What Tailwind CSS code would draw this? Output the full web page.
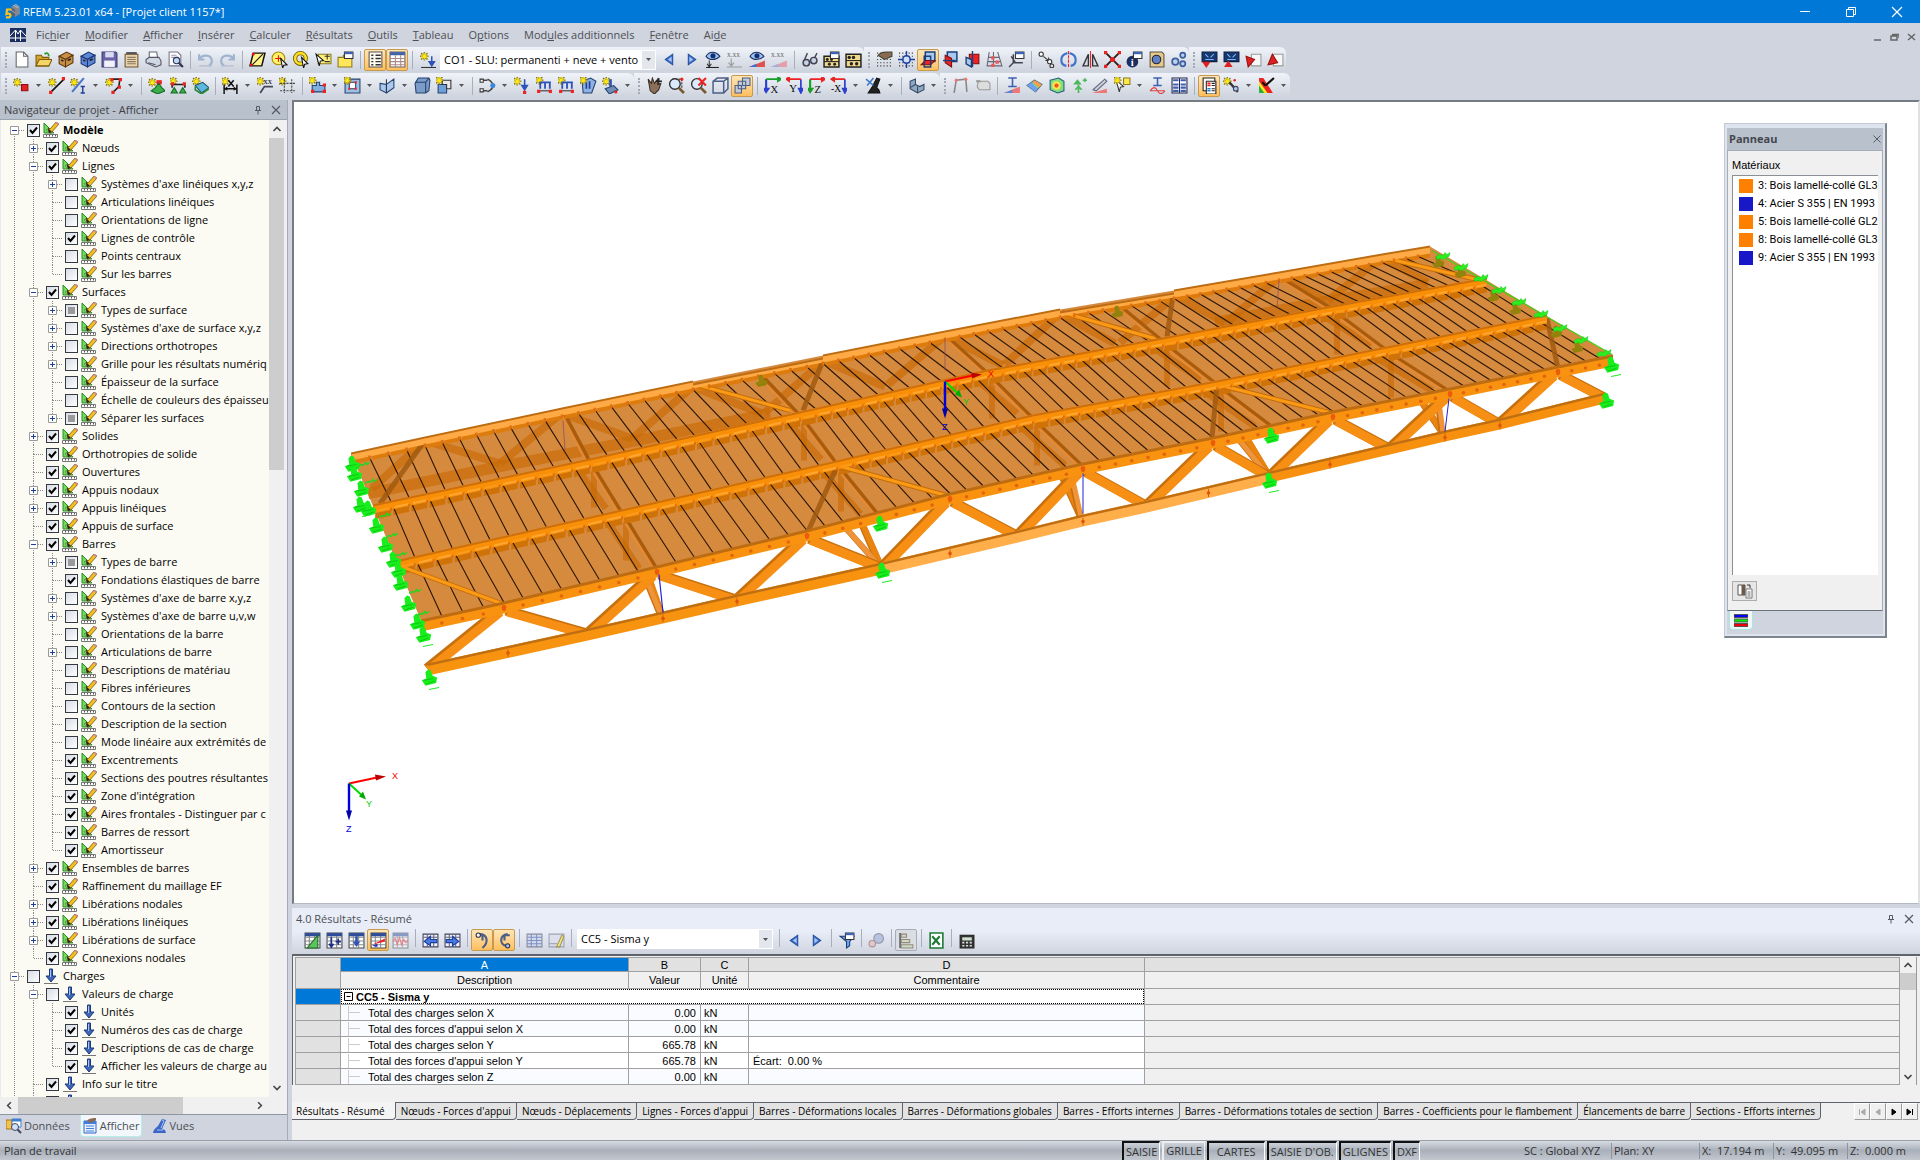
<!DOCTYPE html>
<html lang="fr">
<head>
<meta charset="utf-8">
<title>RFEM 5.23.01 x64 - [Projet client 1157*]</title>
<script src="https://cdn.jsdelivr.net/npm/@tailwindcss/browser@4"></script>
</head>
<body class="h-screen flex flex-col overflow-hidden bg-[#d0d4de] text-[11px] leading-4 text-black font-['Open_Sans','Noto_Sans',sans-serif] cursor-default select-none">

<!-- Title bar -->
<header class="h-[23px] shrink-0 flex items-center bg-[#0078d7] text-white pl-1">
  <svg class="size-4 mr-[3px]" viewBox="0 0 16 16"><path d="M7 3l5-3 4 3v7l-5 3-4-3z" fill="#7e8794"/><path d="M7 3l4 3v7l-4-3z" fill="#56606e"/><path d="M9 1l5 3M11 0l4 3M7 6l4 3" stroke="#b9c2cf" stroke-width=".8"/><path d="M7.500 5.500H3L2.500 10c2-.8 4-.3 4 1.600S4 14 2 13" fill="none" stroke="#ffc21c" stroke-width="2.200"/></svg>
  <h1 class="grow">RFEM 5.23.01 x64 - [Projet client 1157*]</h1>
  <button class="w-[46px] h-full grid place-items-center" aria-label="Réduire"><svg class="size-3" viewBox="0 0 12 12"><path d="M1 5.500h10" stroke="#fff"/></svg></button>
  <button class="w-[46px] h-full grid place-items-center" aria-label="Restaurer"><svg class="size-3" viewBox="0 0 12 12"><path d="M1.500 3.500h7v7h-7zM3.500 3.500v-2h7v7h-2" fill="none" stroke="#fff"/></svg></button>
  <button class="w-[46px] h-full grid place-items-center" aria-label="Fermer"><svg class="size-3" viewBox="0 0 12 12"><path d="M1 1l10 10M11 1L1 11" stroke="#fff" stroke-width="1.200"/></svg></button>
</header>

<!-- Menu bar -->
<nav class="h-6 shrink-0 flex items-center pl-[10px] pr-1 text-[#4c4f55]" id="menu">
  <svg class="w-4 h-[14px] mr-[10px]" viewBox="0 0 16 14"><path d="M0 0h16v14H0z" fill="#1c2f63"/><path d="M0 10h16M5.500 2v11M10.500 2v11M0 8l5.500-6L8 6l2.500-4L16 8" stroke="#fff" fill="none"/></svg>
</nav>

<!-- Toolbars -->
<div class="h-[53px] shrink-0 flex flex-col" id="toolbars"></div>

<main class="flex-1 min-h-0 flex">
  <!-- Navigator -->
  <aside class="w-[288px] shrink-0 flex flex-col border-r border-[#a5abb6] mr-1">
    <div class="h-5 shrink-0 flex items-center bg-[#b9c1cc] pl-1 pr-[6px] text-[#3c4046] border-b border-[#9aa3b0]">
      <h2 class="grow">Navigateur de projet - Afficher</h2>
      <button class="mr-2" aria-label="Épingler"><svg class="size-[10px]" viewBox="0 0 10 10"><path d="M3.500 1.500h3v4h-3zM2 5.500h6M5 6v3.500" fill="none" stroke="#555b66"/></svg></button>
      <button aria-label="Fermer"><svg class="size-[10px]" viewBox="0 0 10 10"><path d="M1 1l8 8M9 1L1 9" stroke="#555b66" stroke-width="1.200"/></svg></button>
    </div>
    <div class="flex-1 min-h-0 flex bg-[#f0f0f0] border-l border-[#e6eaf2]">
      <ul class="flex-1 min-w-0 overflow-hidden bg-[#fcfbf3] pt-px" id="tree"></ul>
      <div class="w-[15px] mr-[3px] flex flex-col items-center">
        <svg class="size-[18px] shrink-0" viewBox="0 0 18 18"><path d="M5.500 11L9 7.500l3.500 3.500" fill="none" stroke="#444" stroke-width="1.600"/></svg>
        <div class="h-[34%] w-full bg-[#cdcdcd]"></div>
        <svg class="size-[18px] shrink-0 mt-auto" viewBox="0 0 18 18"><path d="M5.500 7L9 10.500 12.500 7" fill="none" stroke="#444" stroke-width="1.600"/></svg>
      </div>
    </div>
    <div class="h-[18px] shrink-0 flex items-stretch bg-[#f0f0f0] border-b border-[#8f96a3] pr-[18px]">
      <svg class="w-[18px]" viewBox="0 0 18 18"><path d="M11 5.500L7.500 9l3.500 3.500" fill="none" stroke="#444" stroke-width="1.600"/></svg>
      <div class="w-[165px] bg-[#cdcdcd]"></div>
      <svg class="w-[18px] ml-auto" viewBox="0 0 18 18"><path d="M7 5.500L10.500 9 7 12.500" fill="none" stroke="#444" stroke-width="1.600"/></svg>
    </div>
    <div class="h-[25px] shrink-0 flex items-start pl-1 text-[#4c4f55]">
      <button class="h-[22px] px-[2px] flex items-center gap-[2px]"><svg class="size-4" viewBox="0 0 16 16"><path d="M0 2h6v9H0z" fill="#f2c14e" stroke="#a87712"/><path d="M6 1h9v8H6z" fill="#fff" stroke="#3f7fd0"/><path d="M6 1h9v2.500H6z" fill="#3f7fd0"/><circle cx="9" cy="9" r="3.500" fill="#cfe4fb" stroke="#446"/><path d="M11.500 11.500L15 15" stroke="#446" stroke-width="2"/></svg>Données</button>
      <button class="h-[22px] px-px ml-2 flex items-center gap-[2px] bg-[#f3f7fc] rounded-b-sm border border-t-0 border-[#b5eee8]"><svg class="size-4" viewBox="0 0 16 16"><path d="M2 3h12v12H2z" fill="#e9f1fd" stroke="#2e62c0"/><path d="M2 3h12v3H2z" fill="#3f7fe0"/><path d="M4 8h8M4 10.500h8M4 13h8" stroke="#3f7fe0"/><path d="M5 3c2-3 6-3 9-3v2L9 5z" fill="#8a6a52"/></svg>Afficher</button>
      <button class="h-[22px] px-[2px] ml-2 flex items-center gap-[2px]"><svg class="size-4" viewBox="0 0 16 16"><path d="M1 15h13l-1-3-3-1 4-9-4-1-4 7c-3 2-5 5-5 7z" fill="#3a66c8"/><path d="M5 12h6M10 2l2 1-3 7" fill="none" stroke="#a9c5f7"/></svg>Vues</button>
    </div>
  </aside>

  <div class="flex-1 min-w-0 flex flex-col">
    <!-- Model view -->
    <section class="relative flex-1 min-h-0 bg-white border-t-2 border-l-2 border-r-2 border-b border-t-[#777b82] border-l-[#777b82] border-r-[#dfe1e5] border-b-[#b4b8c0]">
      <svg class="w-full h-full block" viewBox="294 102 1624 800" id="model" role="img" aria-label="Modèle 3D"></svg>
      <aside class="absolute top-[21px] right-[31px] w-[163px] h-[515px] flex flex-col p-[2px] pt-1 bg-[#dfe5f0] border border-[#c3c8d2] border-r-2 border-b-2 border-r-[#7f858f] border-b-[#7f858f]">
        <div class="h-[22px] shrink-0 flex items-center justify-between bg-[#b9c1cc] px-[2px] font-bold text-[#43474e]"><h2>Panneau</h2><button aria-label="Fermer"><svg class="size-2" viewBox="0 0 8 8"><path d="M.5.5l7 7M7.500.5l-7 7" stroke="#555b66"/></svg></button></div>
        <div class="flex-1 min-h-0 flex flex-col bg-[#f0f0f0] border border-[#a7adb8] border-b-[#6c7078] px-1 pt-[6px] font-['Roboto',sans-serif]">
          <h3 class="h-[18px] shrink-0 font-['Liberation_Sans',sans-serif]">Matériaux</h3>
          <ul class="flex-1 bg-white border-t border-l border-[#8b8f96] pt-px pl-[6px] overflow-hidden whitespace-nowrap" id="materials"></ul>
          <button class="mt-[6px] mb-[9px] w-[25px] h-[20px] shrink-0 grid place-items-center border border-[#adadad] bg-[#e6e6e6]" aria-label="Matériaux"><svg class="size-4" viewBox="0 0 16 16"><path d="M1 2h7v10H1z" fill="#fff" stroke="#555"/><path d="M4.500 2H8v10H4.500z" fill="#6b5a4a"/><path d="M10 2h3v3" fill="none" stroke="#333"/><path d="M9 6h6v9H9z" fill="#fff" stroke="#777"/><path d="M10.500 9h3M10.500 11h3M10.500 13h3" stroke="#666"/></svg></button>
        </div>
        <div class="h-[23px] shrink-0 flex bg-[#d0d4de]"><button class="w-[24px] h-[19px] ml-[2px] grid place-items-center bg-[#f2f6fa] rounded-b border border-t-0 border-[#a9e6de]" aria-label="Couleurs"><svg class="w-[14px] h-[13px]" viewBox="0 0 14 13"><path d="M0 .5h14v3H0z" fill="#00f" stroke="#555"/><path d="M0 5h14v3H0z" fill="#0e0" stroke="#555"/><path d="M0 9.500h14v3H0z" fill="#e00" stroke="#555"/></svg></button></div>
      </aside>
    </section>

    <!-- Results -->
    <section class="shrink-0 mt-1 flex flex-col bg-[#f0f0f0]">
      <div class="bg-linear-to-b from-[#e8edf7] from-50% to-[#cfd4de]">
        <div class="h-[21px] flex items-center pl-1 pr-[6px] text-[#4c4f55]">
          <h2 class="grow">4.0 Résultats - Résumé</h2>
          <button class="mr-2" aria-label="Épingler"><svg class="size-[10px]" viewBox="0 0 10 10"><path d="M3.500 1.500h3v4h-3zM2 5.500h6M5 6v3.500" fill="none" stroke="#555b66"/></svg></button>
          <button aria-label="Fermer"><svg class="size-[10px]" viewBox="0 0 10 10"><path d="M1 1l8 8M9 1L1 9" stroke="#555b66" stroke-width="1.200"/></svg></button>
        </div>
        <div class="h-[25px] flex items-start pl-[9px]" id="resultbar"></div>
      </div>
      <div class="border-t-2 border-[#5f646c] border-l pt-px pl-[2px] flex font-['Liberation_Sans',sans-serif]">
        <table class="flex-1 grow w-full table-fixed border-collapse border border-[#a0a0a0] [&_td]:border [&_td]:border-[#a0a0a0] [&_th]:border [&_th]:border-[#a0a0a0] leading-[14px]">
          <colgroup><col class="w-[45px]"><col class="w-[288px]"><col class="w-[72px]"><col class="w-[48px]"><col class="w-[396px]"><col></colgroup>
          <thead>
            <tr class="h-[14px] leading-[12px] [&_th]:font-normal [&_th]:p-0 bg-[#e1e1e1]"><th rowspan="2" class="bg-[#e1e1e1]"></th><th class="bg-[#0078d7] text-white">A</th><th>B</th><th>C</th><th>D</th><th></th></tr>
            <tr class="h-[17px] [&_th]:font-normal [&_th]:p-0 bg-[#f0f0f0]"><th>Description</th><th>Valeur</th><th>Unité</th><th>Commentaire</th><th></th></tr>
          </thead>
          <tbody id="rows"></tbody>
        </table>
        <div class="w-[17px] mr-[3px] flex flex-col items-center bg-[#f0f0f0] border-r border-[#9a9a9a]">
          <svg class="size-4 shrink-0" viewBox="0 0 16 16"><path d="M4.500 10L8 6.500l3.500 3.500" fill="none" stroke="#444" stroke-width="1.600"/></svg>
          <div class="h-[17px] w-full bg-[#cdcdcd]"></div>
          <svg class="size-4 shrink-0 mt-auto" viewBox="0 0 16 16"><path d="M4.500 6L8 9.500 11.500 6" fill="none" stroke="#444" stroke-width="1.600"/></svg>
        </div>
      </div>
      <div class="mt-[17px] mb-[20px] h-[18px] flex items-stretch border-t border-[#5f646c] text-[10px] whitespace-nowrap" id="tabs"></div>
    </section>
  </div>
</main>

<!-- Status bar -->
<footer class="h-5 shrink-0 flex items-center pl-1 bg-linear-to-b from-[#d7dbe2] via-[#a9b0ba] to-[#c3c8d0] text-[#333] border-t border-[#9aa0aa]" id="statusbar"></footer>

<script>
(() => {
const $=id=>document.getElementById(id);
const p=(d,f='none',s='none',w=1)=>`<path d="${d}" fill="${f}" stroke="${s}" stroke-width="${w}"/>`;
const c=(x,y,r,f='none',s='none',w=1)=>`<circle cx="${x}" cy="${y}" r="${r}" fill="${f}" stroke="${s}" stroke-width="${w}"/>`;
const star=(x=4,y=4)=>p(`M${x-4} ${y}h8M${x} ${y-4}v8M${x-3} ${y-3}l6 6M${x+3} ${y-3}l-6 6`,'none','#8a7a10',1.4)+p(`M${x-3} ${y}h6M${x} ${y-3}v6M${x-2} ${y-2}l4 4M${x+2} ${y-2}l-4 4`,'none','#ffe818',1);
const cyl=(f,d)=>p('M2 5l7-4 6 3-7 4z',f,d)+p('M2 5l6 3v7l-6-3z',f,d)+p('M8 8l7-4v7l-7 4z',f,d)+p('M4 8.500l2 1M10 9l3-1.500','none','#222',1.5);
const win=p('M7 1h8v6H7z','#fff','#333')+p('M7 1h8v2H7z','#3b62b8');
const grid=p('M1 1h14v14H1z','#fff','#444')+p('M1 5h14M1 8.500h14M1 12h14M5 1v14M10 1v14','none','#888')+p('M1 1h14v3H1z','#2d4c9a');
const cube=(f)=>p('M4 1h10l1 2-1 10-3 2H2L1 6z',f,'#24426f')+p('M1 5h10l3-4M11 5v10','none','#24426f');
const dots=p('M1 2h14M1 5h14M1 8h14M1 11h14M1 14h14','none','#333',1).replace('/>',' stroke-dasharray="1 2"/>');
const mag=c(6.5,6.5,5,'#dcebfb','#333',1.3)+p('M10 10l5 5','none','#7a5a30',2.6);
const eye=p('M1 5c3-5 9-5 13 0-4 4-10 4-13 0z','#9cc3f2','#1b2f60')+c(7.5,4.500,2.400,'#12306e');
const tri=(u)=>p('M1 1h14v9H1z','#17386f','#0b1d40')+p('M4 3l3 3M12 3L9 6M4 8h8','none','#7fb6ff')+p(u?'M1 15l4-6 4 6z':'M1 10h8l-4 6z','#e02020');
const tri2=(u)=>p('M6 3h9v11H6z','#f7f7f7','#999')+p(u?'M1 13l4-10 5 8z':'M1 5l8 3-6 7z','#e02020','#991010');
const axis=(t,a,b)=>p('M2 2v12M2 14l-2-3h4z','none',b,2)+p('M2 2h11M13 0v4l3-2z',a,a,1.6)+`<text x="6" y="15" font-size="10" font-family="Liberation Serif" fill="#111">${t}</text>`;
const I={
 new:p('M3 1h7l4 4v10H3z','#fff','#666')+p('M10 1v4h4','none','#666'),
 open:p('M1 4h5l1 2h6v8H1z','#d6a72c','#7c5b0a')+p('M1 14l3-6h12l-3 6z','#f6d567','#7c5b0a')+p('M9 3c2-2 4-1 4 2','none','#2b9a32',1.6),
 cab:cyl('#c98f45','#5b3910'),cab2:cyl('#5c86d6','#1b3370'),
 save:p('M1 1h13l1 1v13H1z','#6b63a8','#3c3770')+p('M4 1h8v5H4z','#d8dcf0')+p('M3 9h10v6H3z','#f2f2fa'),
 clip:p('M2 3h12v12H2z','#e9d3ad','#6d5433')+p('M4 6h8M4 8h8M4 10h8M4 12h8','none','#8c7a60')+p('M3 1h10v2H3z','#555'),
 print:p('M4 1h7l1 6H4z','#fff','#667')+p('M1 8l3-2h9l2 3v4l-5 2-9-4z','#cfd6e4','#556')+p('M3 11l7 2','none','#556'),
 prev:p('M2 1h8l3 3v10H2z','#fff','#778')+p('M4 4h5M4 6h7','none','#99a')+c(9,9,3,'#bcd8f5','#335')+p('M11 11l4 4','none','#335',2),
 undo:p('M2 3v5h5M2 8c3-5 11-5 12 1 0 2-1 4-3 5','none','#9fb2cf',2)+p('M2 14h12','none','#b9c4d4',1.500),
 redo:p('M14 3v5H9M14 8C11 3 3 3 2 9c0 2 1 4 3 5','none','#9fb2cf',2)+p('M2 14h12','none','#b9c4d4',1.500),
 sel:p('M4 2h11l-3 12H1z','#fff48a','#111',1.4)+p('M3 13L13 3','none','#111')+c(4,3,1.300,'#e11')+c(2,13,1.300,'#e11'),
 selc:c(7,7,6,'#fff36b','#a88a00')+p('M7 4v6M4 7h6','none','#e11')+p('M9 7l6 6-3 .5L11 16z','#fff','#111'),
 ring:c(7,7,5,'none','#6b5a00',4)+c(7,7,5,'none','#ffdf20',2.400)+p('M8 6l6 6-3 .5L10 16z','#fff','#111'),
 sely:p('M3 3h12v9H3z','#fff07a','#8a7a20')+p('M9 5h5M11.500 3v5M9 10h5','none','#333')+p('M1 3l7 6-3 .5L4 14z','#fff','#111'),
 folder2:p('M1 6h5V4h8v11H1z','#ffe65a','#8a7a20')+win,
 list:p('M2 1h12v14H2z','#fffdf2','#555')+p('M4 4h2M4 7h2M4 10h2M4 13h2M8 4h5M8 7h5M8 10h5M8 13h5','none','#333',1.300),
 tab:p('M1 1h14v14H1z','#fff','#666')+p('M1 1h14v3H1z','#4464a8')+p('M1 7h14M1 10h14M1 13h14M6 4v11M11 4v11','none','#a88'),
 newload:star(5,5)+p('M12 5v7M9.500 10l2.500 4 2.500-4z','#2d52b8','#2d52b8',1.400)+p('M2 15.500h14','none','#333'),
 left:p('M11 3v10L4 8z','#3f6fd0','#24509f')+p('M10 5.500v5L6.500 8z','#a9c8f7'),right:p('M5 3v10l7-5z','#3f6fd0','#24509f')+p('M6 5.500v5L9.500 8z','#a9c8f7'),
 eyel:eye+p('M4 9v5M2 12l2 3 2-3','none','#333')+p('M1 15.500h12','none','#222'),
 xx:`<text x="0" y="6" font-size="7" font-family="Liberation Serif" fill="#666">x.xx</text>`+p('M4 7v6M1.500 11L4 14l2.500-3M0 15h14','none','#999'),
 eyer:eye+p('M0 15h15V9z','#e05050')+p('M0 15l7-3v3z','#3f6fd0'),
 xxr:`<text x="0" y="6" font-size="7" font-family="Liberation Serif" fill="#666">x.xx</text>`+p('M0 15h15V9z','#e3a0a8')+p('M0 15l7-3v3z','#a0b0dc'),
 glass:c(5,11,3,'#c7d4e6','#445',1.400)+c(12,9,3,'#c7d4e6','#445',1.400)+p('M3 9L6 2M13 6l2-4','none','#445',1.300),
 abw:p('M1 5h14v10H1z','#f2d98b','#222',1.400)+p('M1 10h14','none','#222')+c(4,8,1.400,'#222')+c(8,8,1.400,'#222')+c(6,12.500,1.400,'#222')+c(11,12.500,1.400,'#222')+win,
 aba:p('M1 3h14v12H1z','#f2d98b','#222',1.400)+p('M1 9h14','none','#222')+c(4,6,1.600,'#222')+c(8,6,1.600,'#222')+c(6,12,1.600,'#222')+c(11,12,1.600,'#222'),
 gridh:dots+p('M2 4c3-4 8-3 13-3v4L8 8z','#8a6a52','#443'),
 snap:dots+c(8,8,3.500,'#cfe0fb','#1b3f9a',1.400)+p('M8 0v5M8 11v5M0 8h5M11 8h5','none','#1b3f9a',1.300),
 pl1:p('M5 1h9v9H5z','#a9c9ef','#1b3f7a',1.400)+p('M1 13l4-4h9l-4 4z','#e22','#7a1010')+p('M4 5h6v10H4z','none','#1b3f7a',1.400),
 pl2:p('M5 1h9v9H5z','#a9c9ef','#1b3f7a',1.400)+p('M3 4l6 3v8l-6-4z','#e22','#7a1010')+p('M1 9h12','none','#1b3f7a',1.400),
 pl3:p('M5 3h9v9H5z','#e22','#7a1010')+p('M2 6l5 2v7l-5-3zM8 0v15','#a9c9ef','#1b3f7a',1.300),
 axs:p('M3 1l-2 13h14L11 1M2 6h11M2 10h12M7 1v13','none','#667')+p('M5 5h3v3H5zM9 9h3v3H9zM5 12h3v3H5z','#e55'),
 axw:win+p('M5 3v8L1 15M5 11h9M3 5l4 6','none','#445',1.400),
 mv:c(3,3,2,'#fff','#333')+p('M5 5l5 4M10 6v3H7','none','#333')+c(11,10,2,'#fff','#333')+c(13,14,1.800,'#ddd','#333'),
 rot:p('M7 2C-1 4 0 13 6 14M9 2c8 2 7 11 1 12','none','#3f72c8',2)+p('M8 0v16','none','#e22').replace('/>',' stroke-dasharray="3 1"/>'),
 mir:p('M6 3v11H1z','none','#333',1.300)+p('M10 3v11h5z','none','#333',1.300)+p('M8 0v16','none','#e22'),
 xc:p('M1 1l14 14M15 1L1 15','none','#222',1.800)+c(8,8,2.400,'#e22')+p('M0 0h3v3H0zM13 0h3v3h-3zM0 13h3v3H0zM13 13h3v3h-3z','#e22'),
 info:c(6,10,5.500,'#1c2d60')+`<text x="4.500" y="14" font-size="10" font-weight="bold" font-family="Liberation Serif" fill="#fff">i</text>`+win,
 book:p('M2 1h11l2 2v12H2z','#e8c98a','#554')+c(8,8,4,'#5d83c4','#223'),
 gears:c(5,10,3,'#bcd0ee','#3d5f9e',1.600)+c(12,4,2.400,'#bcd0ee','#3d5f9e',1.600)+c(12,12,2.400,'#bcd0ee','#3d5f9e',1.600),
 dn1:tri(0),up1:tri(1),dn2:tri2(0),up2:tri2(1),
 node:star(4,5)+p('M8 7h6v6H8z','#e22222','#901010'),
 line:star(4,5)+p('M2 15L15 2','none','#111',1.500)+p('M1 13h3v3H1zM13 0h3v3h-3z','#e22'),
 bar:star(4,5)+p('M2 14L13 1','none','#4a77c8',2)+p('M10 9h4M12 9v6M10 15h4','none','#1b3f9a',1.300),
 arc:star(4,5)+p('M6 2h8l-1 7-5 5','none','#222',1.500)+p('M5 1h3v3H5zM13 1h3v3h-3zM12 8h3v3h-3zM6 13h3v3H6z','#e22'),
 nsup:star(4,5)+p('M8 3h5v4H8z','#e22')+p('M10 6l3 4 3 3-7 3-6-3 4-3z','#3cae4a','#156b22'),
 lsup:star(3,4)+p('M2 7h12M2 7v3M14 7v3','none','#222',1.500)+p('M1 5h3v3H1zM12 5h3v3h-3z','#e22')+p('M1 15l3-5 3 5zM9 15l3-5 3 5z','#3cae4a','#156b22'),
 ssup:star(4,4)+p('M3 8l7-3 6 5-7 5z','#5db8e0','#256')+p('M3 9v3l6 4 7-5','none','#2b8a3a',1.500),
 dim:star(3,4)+p('M2 7v9M14 7v9M2 11h12M6 3l5 6M11 3L6 9','none','#111',1.400)+p('M2 11l3-2v4zM14 11l-3-2v4z','#111'),
 dimx:star(3,4)+`<text x="6" y="7" font-size="8" font-family="Liberation Serif">xx</text>`+p('M3 15l4-6h8','none','#445',1.600),
 frame:star(3,4)+p('M5 2v13M12 2v13M1 6h14M1 13h14','none','#444').replace('/>',' stroke-dasharray="2 1"/>'),
 surf:star(3,3)+p('M3 8h4V5h3v3h5v6H3z','#7fb0e0','#24426f')+p('M2 12h3v3H2zM13 12h3v3h-3zM13 6h3v3h-3z','#e22'),
 hole:p('M1 2h14v13H1z','#9fc0e4','#24426f')+p('M5 5h6v6H5z','#fff','#24426f')+p('M4 4h2v2H4zM10 4h2v2h-2zM10 10h2v2h-2zM4 10h2v2H4z','#e22')+star(3,3),
 surf2:p('M1 6l6 1v8l-6-3zM7 7l7-5v8l-7 5z','#a9c9ef','#24426f')+p('M7 2v13','none','#335'),
 solid:cube('#7b9cc8'),solid2:p('M2 7h8v8H2z','#6f9fd8','#24426f')+p('M6 3h8v8h-4V7H6z','#e8e8e8','#333')+star(3,3),
 rel:p('M1 3h7M1 13h7','none','#444',1.500)+p('M8 2c4 2 5 4 5 6s-1 4-5 6','none','#444',1.500)+p('M1 2h3v3H1zM1 11h3v3H1z','#fff','#333')+c(13,8,2.400,'#3e88d8'),
 nload:star(3,4)+p('M10 2v8M7.500 8l2.500 4 2.500-4z','#2d52b8','#2d52b8',1.500)+p('M8.500 13h3v3h-3z','#e22'),
 lload:star(3,3)+p('M3 5h11M4 5v6M8.500 5v6M13 5v6','none','#2d52b8',1.700)+p('M2 13h12','none','#333')+p('M1 12h3v3H1zM12 12h3v3h-3z','#e22'),
 vload:p('M2 4l8-3 5 3-4 11H3z','#8eb2e4','#24426f')+p('M6 5v6M9 4v7','none','#1b3f9a',1.600)+star(3,3),
 gload:star(4,4)+p('M8 2v7','none','#2d52b8',2.500)+p('M3 11l8-3 4 4-8 4z','#6f8fb8','#24426f')+c(13,14,1.500,'#e22'),
 hand:p('M2 2l3 4 1-5 2 5 3-4v5l3-1-2 6-4 4-4-3z','#8a6f5c','#3e2f24')+p('M12 1v6M9 4h6','none','#222',1.300),
 zoom:mag+p('M4 2h9v9','none','#333').replace('/>',' stroke-dasharray="2 1"/>')+c(13,2,1.500,'#e22'),
 zoomx:mag+p('M8 1l7 7M15 1L8 8','none','#e22',2),
 wire:p('M1 4l4-3h10v10l-4 4H1zM1 4h10v11M11 4l4-3','none','#4d5f86',1.400),
 cubes:p('M8 1h7v7H8zM4 4h7v7H4zM1 8h6v7H1z','#c3cbd6','#4d5f86'),
 ax:axis('X','#19a02a','#2d3fd0'),ay:p('M14 2v12M14 15l-2-4h4z','#2d3fd0','#2d3fd0',1.600)+p('M3 2h11M3 0v4L0 2z','#e22','#e22',1.500)+`<text x="3" y="14" font-size="10" font-family="Liberation Serif">Y</text>`,
 az:axis('Z','#e22','#19a02a'),amx:p('M14 2v12M14 15l-2-4h4z','#2d3fd0','#2d3fd0',1.600)+p('M4 2h10M4 0v4L1 2z','#19a02a','#e22',1.500)+`<text x="1" y="14" font-size="9" font-family="Liberation Serif">-X</text>`,
 micro:p('M3 15h11l-1-3-2-2 3-8-3-1-4 8z','#222','#111')+p('M1 2l7 6M8 1L2 8','none','#3e78c8',1.500),
 box:p('M2 4l5-2v5l4 2 4-2v5l-6 3-7-4z','#8fa8c0','#334a66')+p('M7 7l-5 3M9 9v6','none','#334a66'),
 fr1:p('M2 15L4 3l9-1 1 12','none','#888',1.500)+c(4,3,1.500,'#e77')+c(13,2,1.500,'#e77'),fr2:p('M4 4h9l2 2v6H5l-2-3z','#ddd','#999')+p('M2 4h4','none','#999',2),
 res1:p('M4 1h8M8 1v8M4 9h8','none','#3f62b0',1.500)+p('M0 15h15V9z','#e77')+p('M0 15l8-3v3z','#5d83d8'),
 rain:p('M1 8l7-5 7 4-6 7z','#7bd88a','#467')+p('M1 8l4-3 6 6-2 3z','#6f9ff0')+p('M8 3l7 4-3 3-6-5z','#f0a050'),
 rcube:p('M2 3l8-2 5 3v9l-6 2-7-3z','#7fe07f','#2a5a7a')+c(8,8,4,'#f7e54a')+c(8,8,2,'#f05030'),
 rsup:p('M7 2l4 5H3z','#4cb85a')+p('M8 7v8M5 12l3-3 3 3','none','#4cb85a',1.600)+p('M12 3h4M14 1v4','none','#4cb85a',1.300),
 rbar:p('M1 12L12 2l2 2L4 13z','#c9d3e2','#667')+p('M0 15h14v-4z','#e77'),
 note:p('M2 3l7 6-3 .5L5 14z','#fff','#333')+p('M9 1h6v6H9z','#ffe84a','#8a7a20')+star(3,3),
 sec:p('M4 1h8M8 1v7M4 8h8','none','#3f62b0',1.500)+p('M1 13c3-4 5-4 7 0s5 3 7 0M1 13h14','none','#d44'),
 table2:p('M1 1h14v14H1z','#fff','#224')+p('M2 3h5M9 3h5M2 7h5M9 7h5M2 10h5M9 10h5M2 13h5M9 13h5','none','#3f5fae',2)+p('M8 1v14','none','#224'),
 legend:p('M2 1h11v12H2z','#fff','#222')+p('M5 4h9v12H5z','#fff','#222')+p('M6 6h3M6 8h3','none','#e22',1.500)+p('M6 11h3M6 13h3','none','#28c',1.500)+p('M10 6h3M10 8h3M10 11h3M10 13h3','none','#222'),
 wand:star(4,4)+p('M6 5l8 9','none','#333',2.200)+c(12,11,2.200,'#a9c9ef','#446')+c(11,3,1.200,'#e22'),
 color:p('M1 1h4l9 14H1z','#e22')+p('M1 4l8 11H1z','#ffe820')+p('M1 8l5 7H1z','#29b03a')+p('M7 8L15 1M7 8l-3-3','none','#111',2),
 g1:grid+p('M13 3v12H3z','#5cc25c','#1d6b25'),g2:grid+p('M5 5v8M3 11l2 3 2-3M9 9h5M11.500 6v6','none','#1b2f8a',1.600),g3:grid+p('M8 4v7','none','#2d52b8',2.500)+p('M4.500 9L8 14l3.500-5z','#2d52b8'),
 g4:grid+p('M2 12l12-6v3z','#e22')+p('M2 13l5-2v3z','#23c'),g5:`<g opacity=".5">${grid}${p('M1 9l2-3 2 6 2-7 2 7 2-5 2 3 2-2','none','#e22')}</g>`,
 gl:p('M1 2h14v12H1z','#eef','#445')+p('M1 5h14M5 2v12M11 2v12','none','#667')+p('M14 7H8V4L2 9l6 4v-3h6z','#4a7ae0','#1b3f9a'),
 gr:p('M1 2h14v12H1z','#eef','#445')+p('M1 5h14M5 2v12M11 2v12','none','#667')+p('M2 7h6V4l6 5-6 4v-3H2z','#4a7ae0','#1b3f9a'),
 j1:p('M3 3h5v5M5 2c8 0 9 8 3 13','none','#4d5f86',2)+c(4,3,2,'#fff','#334'),j2:p('M13 3H8v5M11 2C3 3 3 12 10 13','none','#4d5f86',2)+c(11,13,2,'#9cc3f2','#334'),
 gd:`<g opacity=".7">${p('M1 2h14v12H1z','#cdd6ee','#667')}${p('M1 5h14M1 8h14M1 11h14M5 2v12M10 2v12','none','#5a6fae')}</g>`,gy:`<g opacity=".7">${p('M1 2h14v12H1z','#dde','#889')}${p('M8 14l5-11 2 1-4 10z','#ffe84a','#887a20')}${p('M1 11h8','none','#889')}</g>`,
 filt:p('M2 4l6 5v6l3-2V9l4-5z','#6fa4ea','#1b3f7a')+win,
 infod:`<g opacity=".5">${c(10,6,4.500,'#8fa4d0','#446')}${c(4,11,3,'#e9b0b0','#844')}</g>`,
 bars:p('M2 1v14','none','#556',1.500)+p('M3 2h5v3H3zM3 7h8v3H3zM3 12h11v3H3z','#c9dccb','#987'),
 xl:p('M2 1h12v14H2z','#fff','#1d7a35',1.500)+p('M4 4l7 8M11 4l-7 8','none','#1d7a35',2),
 calc:p('M2 3h13v12H2z','#333','#222')+p('M4 5h9v3H4z','#cfe0cf')+p('M4 10h2M7.500 10h2M11 10h2M4 13h2M7.500 13h2M11 13h2','none','#ddd',1.500),
};
const svg=n=>`<svg class="size-[17px]" viewBox="0 0 16 16">${I[n]}</svg>`;
const combo=t=>{const [w,s]=t.split('~');return `<span class="flex h-[20px] bg-white mx-[2px] ${w==='A'?'w-[216px]':'w-[196px]'}"><select aria-label="Cas de charge" class="appearance-none grow min-w-0 bg-white pl-1 text-[11px] outline-none"><option>${s}</option></select><span class="w-[15px] grid place-items-center bg-[#e3e6ed] border border-white"><svg class="w-[5px] h-[3px]" viewBox="0 0 5 3"><path d="M0 0h5L2.500 3z" fill="#555"/></svg></span></span>`};
const B=n=>n[0]==='!'
 ?`<button class="w-[22px] h-[22px] grid place-items-center rounded-xs border border-[#c79a4e] bg-linear-to-b from-[#fde6b8] to-[#ffbf5c]" aria-label="${n.slice(1)}">${svg(n.slice(1))}</button>`
 :n[0]==='_'?`<button class="w-[22px] h-[22px] grid place-items-center rounded-xs border border-[#a7adb8] bg-[#d9dee2]" aria-label="${n.slice(1)}">${svg(n.slice(1))}</button>`
 :n==='|'?`<span class="w-2 h-[18px] grid justify-center"><span class="w-px h-full bg-[#a8afbb]"></span></span>`
 :n==='v'?`<button class="w-[13px] h-[22px] grid place-items-center" aria-label="Plus"><svg class="w-[5px] h-[3px]" viewBox="0 0 5 3"><path d="M0 0h5L2.500 3z" fill="#555"/></svg></button>`
 :n==='h'?`<span class="w-[9px] h-4 grid justify-center"><span class="h-full border-l-2 border-dotted border-[#a3aab6]"></span></span>`
 :n[0]==='?'?combo(n.slice(1))
 :`<button class="w-[22px] h-[22px] grid place-items-center" aria-label="${n}">${svg(n)}</button>`;
const group=a=>`<div class="flex items-center h-[25px] rounded-r-md bg-linear-to-b from-[#f0f3f9] to-[#cdd3dd]">${a.split(';').map(B).join('')}</div>`;
$('toolbars').innerHTML=[
 ['h;new;open;cab;cab2;save;clip;print;prev;|;undo;redo;|;sel;selc;ring;sely;folder2;|;!list;!tab;|;newload;?A~CO1 - SLU: permanenti + neve + vento;left;right;eyel;xx;eyer;xxr;|;glass;abw;aba','h;gridh;snap;!pl1;pl2;pl3;axs;axw;|;mv;rot;mir;xc;info;book;gears','h;dn1;up1;dn2;up2'],
 ['h;node;v;line;bar;v;arc;v;|;nsup;lsup;ssup;|;dim;v;dimx;frame;|;surf;v;hole;v;surf2;v;solid;solid2;v;|;rel;v;nload;lload;lload;vload;gload;v','h;hand;zoom;zoomx;wire;!cubes;|;ax;ay;az;amx;v;micro;v;|;box;v','h;fr1;fr2;|;res1;rain;rcube;rsup;rbar;note;v;sec;table2;|;!legend;wand;v;color;v']
].map(r=>`<div class="flex h-[26px] items-start pl-[1px]">${r.map(group).join('')}</div>`).join('');
$('resultbar').innerHTML='g1;g2;g3;!g4;g5;|;gl;gr;|;!j1;!j2;|;gd;gy;|;?B~CC5 - Sisma y;|;left;right;|;filt;|;infod;|;_bars;|;xl;|;calc'.split(';').map(B).join('');

$('menu').innerHTML+=[['Fic','h','ier'],['','M','odifier'],['','A','fficher'],['','I','nsérer'],['','C','alculer'],['','R','ésultats'],['','O','utils'],['','T','ableau'],['O','p','tions'],['Mod','u','les additionnels'],['','F','enêtre'],['Ai','d','e']].map(m=>`<a href="#" class="mr-[15px]">${m[0]}<u>${m[1]}</u>${m[2]}</a>`).join('')
 +`<span class="ml-auto flex gap-2 pt-1">${['M1 7h7','M1 3h6v4H1zM2 1.500h7V5','M1 1l7 6M8 1L1 7'].map(d=>`<button aria-label="Fenêtre"><svg class="w-[9px] h-2" viewBox="0 0 9 8"><path d="${d}" fill="none" stroke="#666" stroke-width="1.500"/></svg></button>`).join('')}</span>`;

/* Navigator tree: level, expander (+ - or .), state (1 on, 0 off, g mixed), text */
const T=`0-1Modèle
1+1Nœuds
1-1Lignes
2+0Systèmes d'axe linéiques x,y,z
2.0Articulations linéiques
2.0Orientations de ligne
2.1Lignes de contrôle
2.0Points centraux
2.0Sur les barres
1-1Surfaces
2+gTypes de surface
2+0Systèmes d'axe de surface x,y,z
2+0Directions orthotropes
2+0Grille pour les résultats numériq
2.0Épaisseur de la surface
2.0Échelle de couleurs des épaisseu
2+gSéparer les surfaces
1+1Solides
1.1Orthotropies de solide
1.1Ouvertures
1+1Appuis nodaux
1+1Appuis linéiques
1.1Appuis de surface
1-1Barres
2+gTypes de barre
2.1Fondations élastiques de barre
2+0Systèmes d'axe de barre x,y,z
2+0Systèmes d'axe de barre u,v,w
2.0Orientations de la barre
2+0Articulations de barre
2.0Descriptions de matériau
2.0Fibres inférieures
2.0Contours de la section
2.0Description de la section
2.0Mode linéaire aux extrémités de
2.1Excentrements
2.1Sections des poutres résultantes
2.1Zone d'intégration
2.1Aires frontales - Distinguer par c
2.1Barres de ressort
2.1Amortisseur
1+1Ensembles de barres
1.1Raffinement du maillage EF
1+1Libérations nodales
1+1Libérations linéiques
1+1Libérations de surface
1.1Connexions nodales
0-0Charges
1-0Valeurs de charge
2.1Unités
2.1Numéros des cas de charge
2.1Descriptions de cas de charge
2.1Afficher les valeurs de charge au
1.1Info sur le titre
1.1 `.split('\n');
const more=(i,l)=>{for(let j=i+1;j<T.length;j++){if(+T[j][0]<l)return false;if(+T[j][0]===l)return true}return i>46&&l<2};
let charges=false;
$('tree').innerHTML=T.map((t,i)=>{
 const l=+t[0],e=t[1],s=t[2],x=t.slice(3);if(x==='Charges')charges=true;
 let o='';
 for(let k=0;k<=l;k++){
  let g='';const dash='stroke="#8a8a8a" stroke-dasharray="1 1"';
  if(k<l){if(more(i,k))g=`<path d="M9.500 0v18" ${dash}/>`}
  else{g=(i?`<path d="M9.500 0v9" ${dash}/>`:'')+(more(i,l)?`<path d="M9.500 9v9" ${dash}/>`:'')+`<path d="M10 9.500h9" ${dash}/>`;
   if(e!=='.')g+=`<path d="M5.500 5.500h8v8h-8z" fill="#fff" stroke="#9a9a9a"/><path d="M7 9.500h5${e==='+'?'M9.500 7v5':''}" stroke="#1b3f9a"/>`}
  o+=`<svg class="w-[19px] h-[18px] shrink-0" viewBox="0 0 19 18">${g}</svg>`}
 const ic=charges?'<path d="M6.500 1h3v7H13l-5 6-5-6h3.500z" fill="#3f66b8" stroke="#1d3a78"/><path d="M7.500 2v7" stroke="#a9c5f7"/><path d="M1 15.500h14" stroke="#777"/>'
  :'<path d="M1 1v10h10z" fill="#6fdc5a" stroke="#2a8a2a"/><path d="M3.500 7v2h2z" fill="#fff" stroke="#2a8a2a" stroke-width=".6"/><path d="M5 6l2 1 6-7 3 2-8 9H6z" fill="#f2c01e" stroke="#5a4510" stroke-width=".7"/><path d="M12.500 1l1-1 2.500 2-1 1.500z" fill="#d88a9a"/><path d="M5 6l1 5 3-1z" fill="#222"/><path d="M.5 12.500h14v3H.5z" fill="#fff" stroke="#777"/><path d="M3.500 13v1.500M6.500 13v1.500M9.500 13v1.500M12.500 13v1.500" stroke="#555"/>';
 return `<li class="h-[18px] flex items-center pl-1 whitespace-nowrap">${o}<label class="flex items-center"><span class="w-[19px] grid place-items-center"><input type="checkbox" ${s==='1'?'checked':''} class="peer appearance-none size-[13px] border-[1.5px] border-[#333a44] bg-linear-to-br from-[#d7dbe4] to-white [grid-area:1/1]">${s==='g'?'<span class="size-[7px] bg-[#9a9a9a] [grid-area:1/1]"></span>':'<svg class="size-[11px] hidden peer-checked:block [grid-area:1/1] pointer-events-none" viewBox="0 0 11 11"><path d="M2 5l2.500 3L9 2.500" fill="none" stroke="#000" stroke-width="2"/></svg>'}</span><svg class="size-4 mr-1 shrink-0" viewBox="0 0 16 16">${ic}</svg><span class="${i?'':'font-bold'}">${x}</span></label></li>`}).join('');

$('materials').innerHTML=[['3: Bois lamellé-collé GL30',0],['4: Acier S 355 | EN 1993',1],['5: Bois lamellé-collé GL28',0],['8: Bois lamellé-collé GL30',0],['9: Acier S 355 | EN 1993',1]].map(([t,b])=>`<li class="h-[18px] flex items-center gap-[5px]"><span class="size-[14px] shrink-0 ${b?'bg-[#1818c8]':'bg-[#ff8000]'}"></span>${t}</li>`).join('');

$('rows').innerHTML=[['Total des charges selon X','0.00',''],["Total des forces d'appui selon X",'0.00',''],['Total des charges selon Y','665.78',''],["Total des forces d'appui selon Y",'665.78','Écart:  0.00 %'],['Total des charges selon Z','0.00','']].reduce((h,[a,b,d],i)=>h+`<tr class="h-4 [&_td]:p-0 ${i===2||i===3?'bg-white':'bg-[#f9fbff]'}"><td class="bg-[#e1e1e1] border-r-2"></td><td><span class="flex items-center pl-[7px]"><span class="w-3 h-[14px] border-l border-[#ccc] flex items-center"><span class="w-full h-px bg-[#ccc]"></span></span><span class="pl-2">${a}</span></span></td><td><span class="block text-right pr-1">${b}</span></td><td><span class="block pl-[3px]">kN</span></td><td><span class="block pl-1 whitespace-pre">${d}</span></td><td class="bg-[#f0f0f0]"></td></tr>`,
 `<tr class="h-4 [&_td]:p-0 bg-white font-bold"><td class="bg-[#0078d7] border-r-2"></td><td colspan="4"><span class="flex items-center gap-[3px] h-[15px] border border-dotted border-black pl-[2px]"><svg class="size-[9px]" viewBox="0 0 9 9"><path d="M.5.5h8v8h-8zM2.500 4.500h4" fill="none" stroke="#000"/></svg>CC5 - Sisma y</span></td><td class="bg-[#f0f0f0]"></td></tr>`);

$('tabs').innerHTML=['Résultats - Résumé',"Nœuds - Forces d'appui",'Nœuds - Déplacements',"Lignes - Forces d'appui",'Barres - Déformations locales','Barres - Déformations globales','Barres - Efforts internes','Barres - Déformations totales de section','Barres - Coefficients pour le flambement','Élancements de barre','Sections - Efforts internes'].map((t,i)=>`<button class="border-r border-b border-[#5f646c] rounded-br-sm ${i?'px-[5px] bg-[#e3e3e3]':'pl-1 pr-[10px] bg-[#f4f4f4] -mt-px'}">${t}</button>`).join('')
 +`<span class="ml-auto mr-[2px] flex">${[['M9 3v6L5 6zM3.500 3v6','#aaa'],['M8 3v6L4 6z','#aaa'],['M4 3v6l4-3z','#000'],['M3 3v6l4-3zM8.500 3v6','#000']].map(([d,f])=>`<button aria-label="Défiler" class="w-4 grid place-items-center border border-[#999] border-t-white border-l-white"><svg class="size-3" viewBox="0 0 12 12"><path d="${d}" fill="${f}" stroke="${f}"/></svg></button>`).join('')}</span>`;

$('statusbar').innerHTML=`<span class="grow">Plan de travail</span><span class="flex h-full gap-[2px] mr-[104px]">${['SAISIE','GRILLE','CARTES',"SAISIE D'OB.",'GLIGNES','DXF'].map((t,i)=>`<button class="border-2 border-r border-b-0 ${i===1?'border-[#eceef2] pb-1':'border-[#111] border-r-white'} ${i===2?'px-2':'px-[2px]'}">${t}</button>`).join('')}</span><span class="w-[87px]">SC : Global XYZ</span><span class="w-[88px] border-l border-[#8d939d] pl-[2px]">Plan: XY</span><span class="w-[74px] border-l border-[#8d939d] pl-[2px] whitespace-pre">X:  17.194 m</span><span class="w-[74px] border-l border-[#8d939d] pl-[2px] whitespace-pre">Y:  49.095 m</span><span class="w-[73px] border-l border-[#8d939d] pl-[2px] whitespace-pre">Z:  0.000 m</span>`;

/* Bridge model: four deck chords and the front bottom chord, key points [joist index, x, y] */
const K={
 A:[[0,351,453],[4,425,437],[12,562,408],[20,693,381],[28,823,355],[36,945,331],[44,1060,309],[52,1174,290],[60,1279,272],[68,1382,254],[72,1430,246]],
 B:[[0,373,505],[12,590,459],[24,800,412],[36,988,370],[48,1163,338],[60,1333,306],[72,1487,278]],
 C:[[0,396,561],[12,622,510],[24,837,461],[36,1033,415],[48,1217,381],[60,1387,347],[72,1547,315]],
 D:[[0,421,620],[4,504,602],[12,657,566],[20,807,530],[28,950,493],[36,1083,463],[44,1213,437],[52,1333,411],[60,1450,388],[68,1558,366],[72,1613,355]],
 E:[[0,428,663],[8,588,628],[12,663,611],[16,737,594],[24,882,562],[32,1018,530],[36,1083,514],[40,1147,500],[48,1270,471],[56,1390,443],[60,1445,430],[64,1500,418],[72,1605,392]]};
const P=(k,u)=>{const a=K[k];for(let i=1;i<a.length;i++)if(u<=a[i][0]){const q=a[i-1],r=a[i],t=(u-q[0])/(r[0]-q[0]);return[q[1]+t*(r[1]-q[1]),q[2]+t*(r[2]-q[2])]}return a.at(-1).slice(1)};
const f=v=>v.map(n=>Math.round(n*10)/10).join(' ');
const L=(a,b,s,w=1,o=1)=>`<path d="M${f(a)}L${f(b)}" stroke="${s}" stroke-width="${w}" opacity="${o}"/>`;
const band=(k,u,v,y,h,fill,o=1)=>{let t=[],b=[];const us=[u,...K[k].map(q=>q[0]).filter(n=>n>u&&n<v),v];for(const n of us){const [x,yy]=P(k,n);t.push(f([x,yy+y]));b.unshift(f([x,yy+y+h]))}return `<path d="M${t.join('L')}L${b.join('L')}z" fill="${fill}" opacity="${o}"/>`};
const off=(q,x,y)=>[q[0]+x,q[1]+y];
const dot=(q,r,s)=>c(q[0].toFixed(1),q[1].toFixed(1),r,s);
let m='';
const green=(x,y,s=1,fl='#17ee1c',d='#0bb512')=>`<g transform="translate(${x} ${y}) scale(${s})"><path d="M-4-7l3-3 3 1 2 6 5 2-1 6-12 3-4-6 5-2z" fill="${fl}"/><path d="M-6 2l11-2M-3 6l9-3" stroke="${d}" stroke-width=".8"/></g>`;
/* members seen below the deck */
let under='';
const ud=(a,b,w=8)=>under+=L(a,b,'#c96a05',w,.65);
[[[425,440],[372,488]],[[425,440],[500,463]],[[500,463],[560,414]],[[565,414],[632,438]],[[632,438],[693,386]],[[697,388],[762,413]],[[765,412],[822,362]],[[828,362],[885,386]],[[888,384],[943,337]],[[950,338],[1003,365]],[[1005,364],[1058,314]],[[1065,316],[1115,343]],[[1120,342],[1172,298]],[[1180,298],[1225,322]],[[1228,321],[1278,277]],[[1284,278],[1325,300]],[[1328,300],[1380,258]],[[1386,260],[1428,282]]].forEach(([a,b])=>ud(a,b));
[[[368,493],[500,466]],[[500,466],[632,441]],[[632,441],[770,413]],[[1215,322],[1325,301]],[[1325,301],[1428,284]]].forEach(([a,b])=>ud(a,b,11));
[12,24,36,48,60].forEach(u=>{
 const b=P('B',u),cc=P('C',u),d=P('D',u);
 ud(off(b,-16,5),off(cc,-16,-2),7);ud(off(b,4,6),off(b,4,48),6);
 ud(off(cc,-18,6),off(d,-18,2),7);ud(off(cc,4,6),off(cc,4,50),6);
});
/* front truss */
const FD=(a,b,w=10,s='#f68f14')=>L(off(a,-1,-1),off(b,-1,-1),'#c8700e',w)+L(off(a,.5,.5),off(b,.5,.5),s,w-1);
[12,24,36,48,60].forEach(u=>{const d=P('D',u),e=P('E',u),cc=P('C',u);
 m+=FD(off(cc,u%24?8:4,14),off(e,-1,4),7,'#e98410');
 m+=FD(off(d,u%24?-12:-38,10),off(e,-2,4),6,'#f0943a')});
const lower=[0,8,8,16,16,24,24,32,32,40,40,48,48,56,56,64,64,72],upper=[4,4,12,12,20,20,28,28,36,36,44,44,52,52,60,60,68,68];
lower.forEach((b,i)=>m+=FD(off(P('D',upper[i]),i%2?3:-4,9),off(P('E',b),0,6),10));
m+=band('E',0,24,0,12,'#f7930f')+band('E',24,48,0,12,'#ffae4a')+band('E',48,72,0,11,'#f7900f')+band('E',0,72,0,2.5,'#bf6f12');
/* deck */
const line=k=>K[k].map(q=>f(q.slice(1)));
m+=`<path d="M${line('A').join('L')}L${line('D').reverse().join('L')}z" fill="#d68a3e"/>`+under;
/* cross beams */
[12,24,36,48,60].forEach(u=>['AB','BC','CD'].forEach(([a,b])=>{m+=L(off(P(a,u),2,6),off(P(b,u),0,4),'#a95c0c',5)+L(off(P(a,u),0,7),off(P(b,u),-2,5),'#e48a35',2.500)}));
/* shaded strip beneath the upper chords, then the joists */
for(let u=0;u<72;u++){m+=band('A',u+.15,u+1,6,5,'#dd7c0d')+band('B',u+.12,u+1,8,6,'#cf7208')+band('C',u+.12,u+1,8,6,'#cf7208')}
for(let u=1;u<72;u++){if(u%12===0)continue;
 m+=`<path d="M${f(off(P('A',u),0,8))}L${f(P('B',u))}L${f(P('C',u))}L${f(P('D',u))}" fill="none" stroke="#2a1604" stroke-width="1.100"/>`}
/* bracing */
[[[425,440],[380,503]],[[823,360],[803,410]],[[837,466],[808,531]],[[1173,295],[1167,336]],[[1217,384],[1212,437]],[[1547,318],[1558,368]]].forEach(([a,b])=>m+=L(a,b,'#a05a10',5,.85));
[[[696,384],[790,410]],[[837,465],[950,496]],[[1062,312],[1155,338]],[[1217,384],[1333,413]],[[1383,257],[1477,279]],[[396,564],[504,604]]].forEach(([a,b])=>m+=L(a,b,'#c46c0a',5)+L(a,b,'#fb9a15',3));
/* chord A */
for(const [u,v,h,d] of [[0,20,7,0],[20,28,4,3],[28,44,7,0],[44,52,4,3],[52,72,7,0]])m+=band('A',u,v,d,h,'#ffaa45')+band('A',u,v,d-1,2,'#bd6c12');
for(let u=1;u<72;u++)m+=L(off(P('A',u),0,6),off(P('A',u),0,10),'#e0700c',2.5);
for(const k of 'BC'){m+=band(k,0,72,-1,9,'#f98f06')+band(k,0,72,-1,2,'#cc6f0c');
 for(let u=0;u<72;u++)m+=band(k,u+.2,u+.95,5,2,u%3===0?'#fb9c20':'#ffad3f',.8);
 for(let u=1;u<72;u++)m+=L(off(P(k,u),0,6),off(P(k,u),0,9),'#e0700c',2)}
/* chord D */
m+=band('D',0,72,0,11,'#f8920f')+band('D',0,72,-1,3,'#bd6c12');
for(let u=1;u<72;u++)m+=dot(off(P('D',u),0,7),1.8,'#e2640e');
for(let u=4;u<72;u+=8)m+=dot(off(P('D',u),0,5),2.4,'#ee5a0c');
[4,12,16,28,36,44,52,60,64].forEach(u=>m+=dot(off(P('E',u),0,7),1.8,'#dd560c')+L(off(P('E',u),0,3),off(P('E',u),0,11),'#dd560c',1));
m+=L([659,574],[663,612],'#2222d8',1.2)+L([1083,473],[1083,513],'#2222d8',1)+L([1449,398],[1445,431],'#2222d8',1)+L([563,420],[565,450],'#8a4a60',1,.7)+L([945,338],[945,370],'#8a4a60',1,.7)+L([1279,280],[1277,308],'#8a4a60',1,.7);
/* supports */
[[761,381],[1117,312],[1438,262],[1460,272],[1493,296],[1515,309],[1556,332],[1577,347]].forEach(([x,y])=>m+=green(x,y,.7,'#94820c','#94820c'));
[[352,464],[354,474],[361,489],[360,505],[368,509],[376,526],[385,545],[393,560],[398,570],[400,583],[408,604],[417,622],[423,635],[429,678],[882,571],[880,524],[1271,436],[1269,481],[1611,365],[1606,401]].forEach(([x,y])=>m+=green(x,y,.9));
[[882,573],[1269,483],[429,680],[423,637],[1611,367],[362,507]].forEach(([x,y])=>m+=L([x,y+9],[x+10,y+7],'#17ee1c',1));
m+=L([1432,250],[1612,354],'#3fd01c',1.2);
[[1442,255],[1460,266],[1480,277],[1498,289],[1518,301],[1540,313],[1559,327],[1580,339],[1603,352]].forEach(([x,y])=>m+=`<path d="M${x-6} ${y+1}l4-2 3 1 2-3 2 2 3-2-1 4-3 1-2 2-4-1-3 1z" fill="#2aee20" stroke="#17c81a" stroke-width=".5"/>`);
[[363,463],[370,480],[384,514],[391,534],[400,553],[414,590],[422,612]].forEach(([x,y])=>m+=`<path d="M${x-5} ${y+3}l3-2 2 1 3-3 1 2 3-2" fill="none" stroke="#1fd820" stroke-width="1.400"/>`);
/* axis triads */
const triad=(x,y,t)=>L([x,y],[x+28,y-6],'#f00',2)+`<path d="M${x+26} ${y-9}l11 2-10 4z" fill="#b00"/>`+L([x,y],[x+12,y+11],'#0d0',2)+`<path d="M${x+17} ${y+16}l-7-3 4-5z" fill="#0a0"/>`+L([x,y],[x,y+28],'#00d',2.4)+`<path d="M${x} ${y+37}l-3-10h6z" fill="#00a"/>`
 +`<g font-family="Liberation Sans" font-size="9"><text x="${x+43}" y="${y-5}" fill="#e00">X</text><text x="${x+t}" y="${y+23}" fill="#0c0">Y</text><text x="${x-3}" y="${y+48}" fill="#00d">Z</text></g>`;
m+=triad(945,381,18)+triad(349,783,17);
$('model').innerHTML=m;
})();
</script>
</body>
</html>
